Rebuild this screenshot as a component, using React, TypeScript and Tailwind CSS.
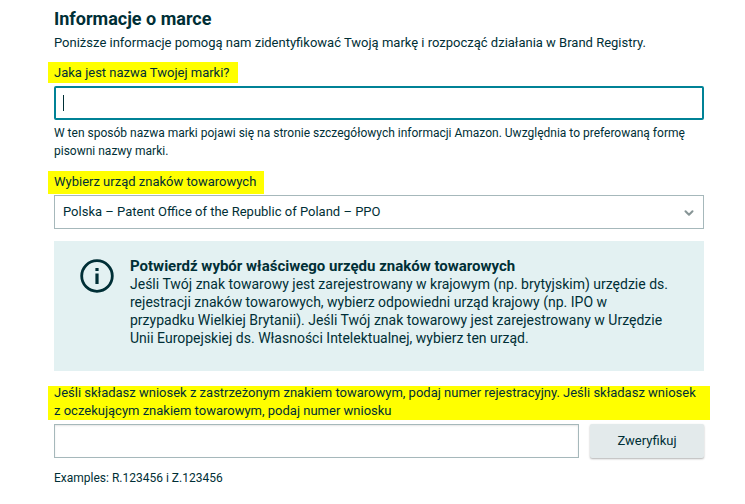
import { useState } from 'react'
import { ChevronDown } from 'lucide-react'

const offices = [
  'Polska – Patent Office of the Republic of Poland – PPO',
]

function InfoIcon() {
  return (
    <svg className="w-[34px] h-[34px] shrink-0" viewBox="0 0 34 34" fill="none" aria-hidden="true">
      <circle cx="17" cy="17" r="15.3" stroke="#002f36" strokeWidth="2.8" />
      <rect x="15.4" y="9" width="3.2" height="3" fill="#002f36" />
      <rect x="15.4" y="14.5" width="3.2" height="10.5" fill="#002f36" />
    </svg>
  )
}

export default function App() {
  const [brand, setBrand] = useState('')
  const [office, setOffice] = useState(offices[0])
  const [number, setNumber] = useState('')

  return (
    <main className="bg-white pl-[54px] pr-[41px] pt-2 pb-4 font-[Roboto,sans-serif] text-[13px] leading-[18px] text-[#002f36]">
      <h1 className="text-[18px] leading-[22px] font-bold">Informacje o marce</h1>
      <p className="mt-1">
        Poniższe informacje pomogą nam zidentyfikować Twoją markę i rozpocząć działania w Brand Registry.
      </p>

      <div className="mt-2.5">
        <label htmlFor="brand" className="block w-fit -ml-1.5 pl-1.5 pr-2 pt-0.5 pb-px bg-[#ffff00]">
          Jaka jest nazwa Twojej marki?
        </label>
        <div className="relative mt-[3px]">
          <input
            id="brand"
            className="block w-full h-[34px] px-2 border-2 border-[#008296] rounded-xs bg-white outline-none"
            value={brand}
            onChange={e => setBrand(e.target.value)}
          />
          {brand === '' && (
            <span className="absolute left-[9px] top-[9px] w-px h-4 bg-[#002f36] pointer-events-none" />
          )}
        </div>
        <p className="mt-1 text-[12px]">
          W ten sposób nazwa marki pojawi się na stronie szczegółowych informacji Amazon. Uwzględnia to preferowaną formę<br />pisowni nazwy marki.
        </p>
      </div>

      <div className="mt-[11px]">
        <label htmlFor="office" className="block w-fit -ml-1.5 pl-1.5 pr-2 pt-0.5 pb-[3px] bg-[#ffff00]">
          Wybierz urząd znaków towarowych
        </label>
        <div className="relative mt-px">
          <select
            id="office"
            className="block w-full h-[34px] pl-2 pr-8 appearance-none border border-[#a6b8bb] bg-white outline-none"
            value={office}
            onChange={e => setOffice(e.target.value)}
          >
            {offices.map(o => (
              <option key={o}>{o}</option>
            ))}
          </select>
          <ChevronDown
            className="absolute right-2 top-[11px] w-3.5 h-3.5 text-[#879596] pointer-events-none"
            strokeWidth={3.5}
          />
        </div>
      </div>

      <section className="mt-3 flex gap-4 bg-[#e3f1f2] pl-[26px] pr-2 pt-4 pb-6 text-[14px]">
        <div className="pt-0.5">
          <InfoIcon />
        </div>
        <div>
          <h2 className="text-[15px] leading-[18px] font-bold">Potwierdź wybór właściwego urzędu znaków towarowych</h2>
          <p>
            Jeśli Twój znak towarowy jest zarejestrowany w krajowym (np. brytyjskim) urzędzie ds.<br />rejestracji znaków towarowych, wybierz odpowiedni urząd krajowy (np. IPO w<br />przypadku Wielkiej Brytanii). Jeśli Twój znak towarowy jest zarejestrowany w Urzędzie<br />Unii Europejskiej ds. Własności Intelektualnej, wybierz ten urząd.
          </p>
        </div>
      </section>

      <div className="mt-[13px]">
        <label
          htmlFor="number"
          className="block -mx-1.5 px-1.5 bg-[linear-gradient(#ffff00,#ffff00)] bg-no-repeat bg-[position:0_2px]"
        >
          Jeśli składasz wniosek z zastrzeżonym znakiem towarowym, podaj numer rejestracyjny. Jeśli składasz wniosek<br />z oczekującym znakiem towarowym, podaj numer wniosku
        </label>
        <div className="mt-1 flex gap-[11px]">
          <input
            id="number"
            className="min-w-0 flex-1 h-[34px] px-2 border border-[#a6b8bb] bg-white shadow-[inset_0_1px_2px_rgba(0,0,0,0.1)] outline-none"
            value={number}
            onChange={e => setNumber(e.target.value)}
          />
          <button className="w-[114px] h-[34px] rounded-xs bg-[#e3eaeb] shadow-[0_1px_2px_rgba(0,0,0,0.3)]">
            Zweryfikuj
          </button>
        </div>
        <p className="mt-[11px] text-[12px]">Examples: R.123456 i Z.123456</p>
      </div>
    </main>
  )
}
